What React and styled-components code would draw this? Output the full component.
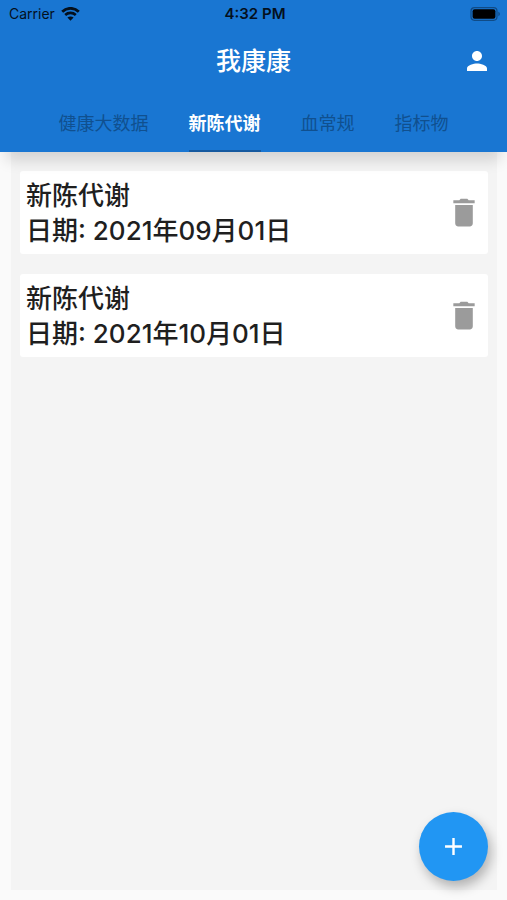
import React, { useState } from 'react';
import styled, { createGlobalStyle, ThemeProvider } from 'styled-components';

const theme = {
  clrs: {
    cBar: '#1976d2',
    cAccent: '#2196f3',
    cWhite: '#ffffff',
    cPage: '#fafafa',
    cPanel: '#f4f4f4',
    cFontDark: '#1f1f1f',
    cTab: '#10508f',
    cIcon: '#9b9b9b',
  },
};

const GlobalStyle = createGlobalStyle`
  *,
  *::before,
  *::after {
    box-sizing: border-box;
  }

  body {
    margin: 0;
    background: ${props => props.theme.clrs.cPage};
    color: ${props => props.theme.clrs.cFontDark};
    font-family: Inter, 'Noto Sans CJK SC', sans-serif;
  }

  button {
    padding: 0;
    border: none;
    background: none;
    font-family: inherit;
    cursor: pointer;
  }
`;

const Screen = styled.div`
  display: flex;
  flex-direction: column;
  min-height: 100vh;
`;

const Header = styled.header`
  position: relative;
  z-index: 1;
  background: ${props => props.theme.clrs.cBar};
  box-shadow: 0 14px 14px -6px rgba(0, 0, 0, 0.14);
`;

const StatusBar = styled.div`
  display: grid;
  grid-template-columns: 1fr auto 1fr;
  align-items: center;
  height: 28px;
  padding: 0 6px 0 9px;
  color: #04101d;
  font-size: 14px;
  line-height: 20px;
`;

const Carrier = styled.div`
  display: flex;
  align-items: center;
  gap: 6px;
`;

const Clock = styled.time`
  font-weight: 600;
  font-size: 15px;
`;

const BatteryIcon = styled.svg`
  justify-self: end;
`;

const TitleBar = styled.div`
  display: grid;
  grid-template-columns: 1fr auto 1fr;
  align-items: center;
  height: 65px;
  padding: 0 15px;
`;

const Title = styled.h1`
  grid-column: 2;
  margin: 0;
  font-weight: 500;
  font-size: 25px;
  line-height: 36px;
  color: ${props => props.theme.clrs.cWhite};
`;

const IconButton = styled.button`
  display: flex;
  justify-self: end;
  color: ${props => props.color};
`;

const Tabs = styled.nav`
  display: flex;
  justify-content: center;
  gap: 40px;
`;

const Tab = styled.button`
  height: 59px;
  padding-top: 5px;
  border-bottom: 2px solid ${props => (props.$active ? '#15599f' : 'transparent')};
  font-weight: ${props => (props.$active ? 700 : 400)};
  font-size: 18px;
  line-height: 26px;
  color: ${props => (props.$active ? props.theme.clrs.cWhite : props.theme.clrs.cTab)};
`;

const Panel = styled.main`
  flex: 1;
  margin: 0 10px 10px 11px;
  padding: 19px 9px;
  background: ${props => props.theme.clrs.cPanel};
`;

const List = styled.ul`
  display: flex;
  flex-direction: column;
  gap: 20px;
  margin: 0;
  padding: 0;
  list-style: none;
`;

const Card = styled.li`
  display: flex;
  align-items: center;
  justify-content: space-between;
  padding: 0 8px 0 6px;
  border-radius: 3px;
  background: ${props => props.theme.clrs.cWhite};
`;

const CardText = styled.div`
  padding: 7px 0 6px;
`;

const Detail = styled.p`
  margin: 0;
  font-weight: 500;
  font-size: 26px;
  line-height: 35px;
`;

const AddButton = styled.button`
  position: fixed;
  right: 19px;
  bottom: 19px;
  z-index: 2;
  display: flex;
  align-items: center;
  justify-content: center;
  width: 69px;
  height: 69px;
  border-radius: 50%;
  && {
    background: ${props => props.theme.clrs.cAccent};
  }
  box-shadow: 3px 6px 12px rgba(0, 0, 0, 0.28);
`;

const tabs = ['健康大数据', '新陈代谢', '血常规', '指标物'];

const records = [
  { id: 1, name: '新陈代谢', date: '2021年09月01日' },
  { id: 2, name: '新陈代谢', date: '2021年10月01日' },
];

const WifiIcon = () => (
  <svg width="19" height="14" viewBox="0 0 19 14" fill="none" stroke="currentColor" aria-hidden="true">
    <path d="M1.2 4.7C5.8.2 13.2.2 17.8 4.7" strokeWidth="2.8" />
    <path d="M4.2 8C7.2 5.2 11.8 5.2 14.8 8" strokeWidth="2.6" />
    <path d="M9.5 13.7L6.4 10.6C8.2 9 10.8 9 12.6 10.6Z" fill="currentColor" stroke="none" />
  </svg>
);

const Battery = () => (
  <BatteryIcon width="31" height="14" viewBox="0 0 31 14" aria-hidden="true">
    <rect x="1" y="0.7" width="26" height="12.6" rx="3.5" fill="none" stroke="#104b86" strokeWidth="1.2" />
    <rect x="2.6" y="2.3" width="22.8" height="9.4" rx="2" fill="#000" />
    <path d="M28.4 4.8C30.3 5.5 30.3 8.5 28.4 9.2Z" fill="#104b86" />
  </BatteryIcon>
);

const App = () => {
  const [active, setActive] = useState(1);
  const [items, setItems] = useState(records);

  return (
    <ThemeProvider theme={theme}>
      <GlobalStyle />
      <Screen>
        <Header>
          <StatusBar>
            <Carrier>
              Carrier
              <WifiIcon />
            </Carrier>
            <Clock>4:32 PM</Clock>
            <Battery />
          </StatusBar>
          <TitleBar>
            <Title>我康康</Title>
            <IconButton color={theme.clrs.cWhite} aria-label="个人">
              <svg width="30" height="30" viewBox="0 0 24 24" fill="currentColor">
                <path d="M12 12c2.21 0 4-1.79 4-4s-1.79-4-4-4-4 1.79-4 4 1.79 4 4 4zm0 2c-2.67 0-8 1.34-8 4v2h16v-2c0-2.66-5.33-4-8-4z" />
              </svg>
            </IconButton>
          </TitleBar>
          <Tabs>
            {tabs.map((label, i) => (
              <Tab key={label} $active={i === active} onClick={() => setActive(i)}>
                {label}
              </Tab>
            ))}
          </Tabs>
        </Header>
        <Panel>
          <List>
            {items.map(item => (
              <Card key={item.id}>
                <CardText>
                  <Detail>{item.name}</Detail>
                  <Detail>日期: {item.date}</Detail>
                </CardText>
                <IconButton
                  color={theme.clrs.cIcon}
                  aria-label="删除"
                  onClick={() => setItems(items.filter(other => other.id !== item.id))}
                >
                  <svg width="32" height="37" viewBox="0 0 24 24" preserveAspectRatio="none" fill="currentColor">
                    <path d="M5.4 19c0 1.1.9 2 2 2h9.2c1.1 0 2-.9 2-2V7.2H5.4V19zM20 4h-4.500l-1-1h-5l-1 1H4v2h16V4z" />
                  </svg>
                </IconButton>
              </Card>
            ))}
          </List>
        </Panel>
        <AddButton aria-label="添加">
          <svg width="29" height="29" viewBox="0 0 24 24" fill="#fff">
            <path d="M19 13h-6v6h-2v-6H5v-2h6V5h2v6h6v2z" />
          </svg>
        </AddButton>
      </Screen>
    </ThemeProvider>
  );
};

export default App;
